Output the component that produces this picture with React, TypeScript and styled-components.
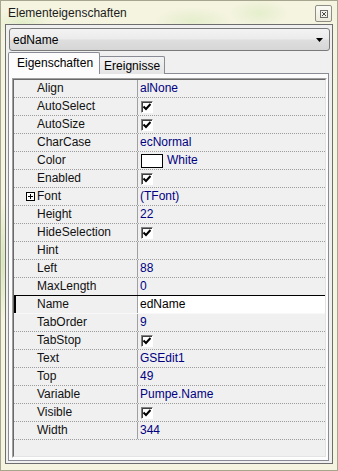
import React from "react";
import styled, { createGlobalStyle } from "styled-components";

const GlobalStyle = createGlobalStyle`
  html, body {
    margin: 0;
    padding: 0;
    background: #f4f3df;
  }
  body {
    font-family: "Liberation Sans", Arial, sans-serif;
    font-size: 12px;
  }
`;

/* outer window with the aero frame */
const Window = styled.div`
  box-sizing: border-box;
  width: 338px;
  height: 471px;
  border: 1px solid #a6a58e;
  background:
    radial-gradient(ellipse 30px 14px at 22px 22px, rgba(190, 225, 160, 0.35), transparent),
    radial-gradient(ellipse 40px 14px at 192px 20px, rgba(190, 225, 160, 0.3), transparent),
    radial-gradient(ellipse 30px 14px at 258px 12px, rgba(190, 225, 160, 0.3), transparent),
    radial-gradient(ellipse 4px 60px at 2px 260px, rgba(170, 210, 140, 0.45), transparent),
    #f5f4e0;
  display: flex;
  flex-direction: column;
  padding: 0 4px 6px 4px;
`;

const TitleBar = styled.div`
  height: 23px;
  display: flex;
  align-items: flex-start;
  justify-content: space-between;
`;

const Title = styled.span`
  margin: 5px 0 0 3px;
  color: #1b1b1b;
  line-height: 15px;
`;

const CloseButton = styled.div`
  box-sizing: border-box;
  width: 17px;
  height: 17px;
  margin: 4px 1px 0 0;
  border: 1px solid #8e8e84;
  border-radius: 2px;
  background: linear-gradient(#fbfbf6, #ecebdc);
  display: flex;
  align-items: center;
  justify-content: center;
`;

/* client area of the window */
const Client = styled.div`
  flex: 1;
  display: flex;
  flex-direction: column;
  border: 1px solid #6e6e6e;
  background: #f0f0f0;
  padding: 3px 3px 2px 2px;
`;

const Combo = styled.div`
  box-sizing: border-box;
  height: 23px;
  margin: 0 -1px 0 1px;
  border: 1px solid #7a7a7a;
  border-radius: 3px;
  background: linear-gradient(#f3f3f3, #ebebeb 48%, #dedede 52%, #d6d6d6);
  display: flex;
  align-items: center;
  justify-content: space-between;
  padding: 0 6px 0 3px;
  color: #000;
`;

const TabStrip = styled.div`
  position: relative;
  z-index: 1;
  height: 22px;
  margin: 1px 0 -1px 0;
  display: flex;
  align-items: flex-end;
`;

const Tab = styled.div<{ $active?: boolean }>`
  box-sizing: border-box;
  height: ${(p) => (p.$active ? "22px" : "18px")};
  padding: ${(p) => (p.$active ? "3px 6px 0 8px" : "2px 4px 0 4px")};
  border: 1px solid #898c95;
  border-bottom: none;
  border-radius: 2px 2px 0 0;
  background: ${(p) => (p.$active ? "#fcfcfc" : "linear-gradient(#f3f3f3, #e4e4e4)")};
  margin-left: ${(p) => (p.$active ? "0" : "-1px")};
  color: #000;
  line-height: 15px;
`;

const TabPage = styled.div`
  flex: 1;
  display: flex;
  flex-direction: column;
  border: 1px solid #898c95;
  background: #fcfcfc;
  padding: 4px 1px 2px 3px;
`;

/* sunken frame around the inspector grid */
const GridFrame = styled.div`
  flex: 1;
  display: flex;
  border: 1px solid;
  border-color: #a0a0a0 #ffffff #ffffff #a0a0a0;
`;

const GridBody = styled.div`
  flex: 1;
  border: 1px solid;
  border-color: #696969 #e3e3e3 #e3e3e3 #696969;
  background: #f0f0f0;
`;

const Row = styled.div<{ $selected?: boolean }>`
  position: relative;
  display: grid;
  grid-template-columns: 124px 1fr;
  height: 17px;
  border-bottom: 1px dotted #9c9c9c;
  ${(p) =>
    p.$selected &&
    `
    margin-top: -1px;
    border-top: 1px solid #000;
    border-bottom: 1px solid #f8f8f8;
    box-shadow: inset 2px 0 0 #000;
  `}
`;

const NameCell = styled.div`
  display: flex;
  align-items: center;
  padding-left: 12px;
  border-right: 1px solid #a0a0a0;
  color: #111;
  line-height: 17px;
  white-space: nowrap;
`;

const Expander = styled.span`
  width: 11px;
  height: 9px;
  flex: none;
  display: flex;
`;

const ValueCell = styled.div<{ $selected?: boolean }>`
  display: flex;
  align-items: center;
  padding-left: 2px;
  color: ${(p) => (p.$selected ? "#000" : "#000080")};
  background: ${(p) => (p.$selected ? "#ffffff" : "transparent")};
  line-height: 17px;
  white-space: nowrap;
`;

const CheckBox = styled.span`
  box-sizing: border-box;
  width: 12px;
  height: 12px;
  margin-left: 1px;
  border: 1px solid;
  border-color: #808080 #ffffff #ffffff #808080;
  box-shadow: inset 1px 1px 0 #404040;
  background: #fff;
  display: flex;
  align-items: center;
  justify-content: center;
`;

const Swatch = styled.span`
  box-sizing: border-box;
  width: 22px;
  height: 14px;
  margin: 0 4px 0 1px;
  border: 1px solid #000;
  background: #fff;
`;

type Prop = {
  name: string;
  value?: string;
  check?: boolean;
  color?: boolean;
  expand?: boolean;
  selected?: boolean;
};

const props: Prop[] = [
  { name: "Align", value: "alNone" },
  { name: "AutoSelect", check: true },
  { name: "AutoSize", check: true },
  { name: "CharCase", value: "ecNormal" },
  { name: "Color", value: "White", color: true },
  { name: "Enabled", check: true },
  { name: "Font", value: "(TFont)", expand: true },
  { name: "Height", value: "22" },
  { name: "HideSelection", check: true },
  { name: "Hint", value: "" },
  { name: "Left", value: "88" },
  { name: "MaxLength", value: "0" },
  { name: "Name", value: "edName", selected: true },
  { name: "TabOrder", value: "9" },
  { name: "TabStop", check: true },
  { name: "Text", value: "GSEdit1" },
  { name: "Top", value: "49" },
  { name: "Variable", value: "Pumpe.Name" },
  { name: "Visible", check: true },
  { name: "Width", value: "344" },
];

const Check = () => (
  <svg width="8" height="8" viewBox="0 0 8 8">
    <path d="M0.5 3.5 L3 6 L7.5 1" fill="none" stroke="#000" strokeWidth="2" />
  </svg>
);

const PlusBox = () => (
  <svg width="9" height="9" viewBox="0 0 9 9">
    <rect x="0.5" y="0.5" width="8" height="8" fill="#fff" stroke="#000" />
    <path d="M2 4.5 H7 M4.5 2 V7" stroke="#000" />
  </svg>
);

const CloseGlyph = () => (
  <svg width="8" height="8" viewBox="0 0 8 8">
    <rect x="0.5" y="0.5" width="7" height="7" fill="none" stroke="#6a6a6a" />
    <path d="M2 2 L6 6 M6 2 L2 6" stroke="#4a4a4a" />
  </svg>
);

const Arrow = () => (
  <svg width="7" height="4" viewBox="0 0 7 4">
    <path d="M0 0 H7 L3.5 4 Z" fill="#000" />
  </svg>
);

export default function App() {
  return (
    <>
      <GlobalStyle />
      <Window>
        <TitleBar>
          <Title>Elementeigenschaften</Title>
          <CloseButton>
            <CloseGlyph />
          </CloseButton>
        </TitleBar>
        <Client>
          <Combo>
            <span>edName</span>
            <Arrow />
          </Combo>
          <TabStrip>
            <Tab $active>Eigenschaften</Tab>
            <Tab>Ereignisse</Tab>
          </TabStrip>
          <TabPage>
            <GridFrame>
              <GridBody>
                {props.map((p) => (
                  <Row key={p.name} $selected={p.selected}>
                    <NameCell>
                      <Expander>{p.expand && <PlusBox />}</Expander>
                      {p.name}
                    </NameCell>
                    <ValueCell $selected={p.selected}>
                      {p.check ? (
                        <CheckBox>
                          <Check />
                        </CheckBox>
                      ) : (
                        <>
                          {p.color && <Swatch />}
                          {p.value}
                        </>
                      )}
                    </ValueCell>
                  </Row>
                ))}
              </GridBody>
            </GridFrame>
          </TabPage>
        </Client>
      </Window>
    </>
  );
}
